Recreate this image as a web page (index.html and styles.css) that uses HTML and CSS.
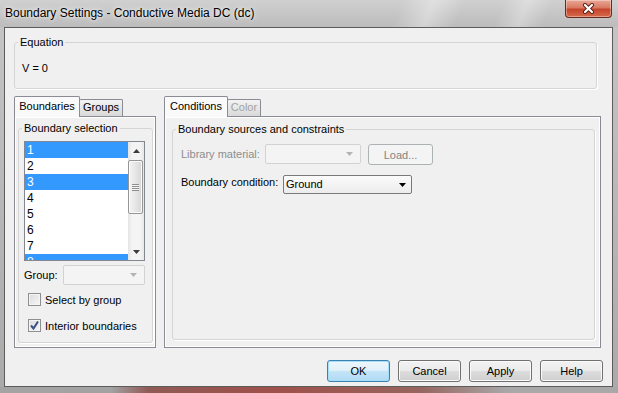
FILE: index.html
```html
<!DOCTYPE html>
<html lang="en">
  <head>
    <meta charset="UTF-8" />
    <title>Boundary Settings - Conductive Media DC (dc)</title>
    <link rel="stylesheet" href="styles.css">
  </head>
  <body>
    <div class="window">
      <!-- Title bar -->
      <div class="titlebar">
        <span class="title">Boundary Settings - Conductive Media DC (dc)</span>
        <span class="close-btn">
          <svg width="13" height="11" viewBox="0 0 13 11">
            <path d="M3 2 L10 9 M10 2 L3 9" stroke="#5a1c12" stroke-width="4" stroke-linecap="round" fill="none"/>
            <path d="M3 2 L10 9 M10 2 L3 9" stroke="#ffffff" stroke-width="2.2" stroke-linecap="round" fill="none"/>
          </svg>
        </span>
      </div>

      <div class="client">
        <!-- Equation -->
        <fieldset class="group equation">
          <legend>Equation</legend>
          <div class="equation-body">V = 0</div>
        </fieldset>

        <div class="panels">
          <!-- Boundaries / Groups -->
          <div class="tabctl tabctl-left">
            <div class="tabs">
              <span class="tab active tab-boundaries">Boundaries</span>
              <span class="tab tab-groups">Groups</span>
            </div>
            <div class="pane">
              <fieldset class="group selection">
                <legend>Boundary selection</legend>
                <div class="selection-body">
                  <div class="listbox">
                    <div class="items">
                      <div class="item selected">1</div>
                      <div class="item">2</div>
                      <div class="item selected">3</div>
                      <div class="item">4</div>
                      <div class="item">5</div>
                      <div class="item">6</div>
                      <div class="item">7</div>
                      <div class="item selected">8</div>
                    </div>
                    <div class="vscroll">
                      <div class="arrow">
                        <svg width="7" height="4" viewBox="0 0 7 4"><path d="M3.5 0 L7 4 L0 4 Z" fill="#3c3c3c"/></svg>
                      </div>
                      <div class="track">
                        <div class="thumb"><span class="grip"></span></div>
                      </div>
                      <div class="arrow">
                        <svg width="7" height="4" viewBox="0 0 7 4"><path d="M0 0 L7 0 L3.5 4 Z" fill="#3c3c3c"/></svg>
                      </div>
                    </div>
                  </div>

                  <div class="group-row">
                    <span class="group-label">Group:</span>
                    <span class="combo disabled group-combo">
                      <svg width="7" height="4" viewBox="0 0 7 4"><path d="M0 0 L7 0 L3.5 4 Z" fill="#b4b4b4"/></svg>
                    </span>
                  </div>

                  <div class="check-row first">
                    <span class="checkbox"></span>
                    <span>Select by group</span>
                  </div>
                  <div class="check-row">
                    <span class="checkbox">
                      <svg width="11" height="11" viewBox="0 0 11 11"><path d="M2 5.5 L4.5 8.5 L9 1.5" stroke="#3b4f86" stroke-width="2" fill="none"/></svg>
                    </span>
                    <span>Interior boundaries</span>
                  </div>
                </div>
              </fieldset>
            </div>
          </div>

          <!-- Conditions / Color -->
          <div class="tabctl tabctl-right">
            <div class="tabs">
              <span class="tab active tab-conditions">Conditions</span>
              <span class="tab disabled tab-color">Color</span>
            </div>
            <div class="pane">
              <fieldset class="group sources">
                <legend>Boundary sources and constraints</legend>
                <div class="sources-body">
                  <div class="form-row">
                    <span class="form-label disabled library-label">Library material:</span>
                    <span class="combo disabled library-combo">
                      <svg width="7" height="4" viewBox="0 0 7 4"><path d="M0 0 L7 0 L3.5 4 Z" fill="#b4b4b4"/></svg>
                    </span>
                    <span class="btn disabled load-btn">Load...</span>
                  </div>
                  <div class="form-row second">
                    <span class="form-label condition-label">Boundary condition:</span>
                    <span class="combo condition-combo">
                      <span class="combo-text">Ground</span>
                      <svg width="7" height="4" viewBox="0 0 7 4"><path d="M0 0 L7 0 L3.5 4 Z" fill="#000"/></svg>
                    </span>
                  </div>
                </div>
              </fieldset>
            </div>
          </div>
        </div>

        <!-- Dialog buttons -->
        <div class="buttons">
          <span class="btn default">OK</span>
          <span class="btn">Cancel</span>
          <span class="btn">Apply</span>
          <span class="btn">Help</span>
        </div>
      </div>

      <div class="frame-bottom"></div>
    </div>
  </body>
</html>
```

FILE: styles.css
```css
* {
  box-sizing: border-box;
}
html,
body {
  margin: 0;
  padding: 0;
}
body {
  width: 618px;
  height: 393px;
  overflow: hidden;
  font-family: "Liberation Sans", Arial, sans-serif;
  font-size: 11px;
  color: #000;
  background: #b4b4b4;
}
.window {
  height: 393px;
  display: flex;
  flex-direction: column;
  background: linear-gradient(#c6c6c6, #aaaaaa);
}

/* Title bar */
.titlebar {
  flex: none;
  height: 27px;
  display: flex;
  justify-content: space-between;
  align-items: flex-start;
  padding: 0 6px 0 5px;
  background:
    linear-gradient(112deg, rgba(255, 255, 255, 0) 64%, rgba(255, 255, 255, 0.35) 69%, rgba(255, 255, 255, 0) 74%, rgba(255, 255, 255, 0) 80%, rgba(255, 255, 255, 0.3) 84%, rgba(255, 255, 255, 0) 88%),
    linear-gradient(#d0d0d0, #bcbcbc);
}
.title {
  margin-top: 6px;
  font-size: 12px;
  line-height: 15px;
  text-shadow: 0 0 6px rgba(255, 255, 255, 0.9), 0 0 3px rgba(255, 255, 255, 0.7);
}
.close-btn {
  width: 47px;
  height: 18px;
  display: flex;
  align-items: center;
  justify-content: center;
  border: 1px solid #6a2a1f;
  border-top: none;
  border-radius: 0 0 4px 4px;
  background: linear-gradient(#e9a898, #d97a62 45%, #c4452c 55%, #d8694c);
  box-shadow: inset 0 0 0 1px rgba(255, 255, 255, 0.35);
}

/* Client area */
.client {
  flex: none;
  height: 360px;
  margin: 0 5px 0 4px;
  border: 1px solid #5c5c5c;
  background: #f0f0f0;
  display: flex;
  flex-direction: column;
}
.frame-bottom {
  flex: 1;
  background: linear-gradient(to right, #a4a4a4, #a2a2a2 18%, #8f5a55 24%, #a0504a 45%, #96655f 68%, #a8a8a8 82%);
}

/* Group boxes */
.group {
  margin: 0;
  padding: 0;
  min-width: 0;
  border: 1px solid #d5d5d5;
  border-radius: 3px;
  box-shadow: 1px 1px 0 #fff;
}
.group legend {
  margin-left: 3px;
  padding: 0 2px;
  line-height: 13px;
}
.equation {
  margin: 8px 15px 0 9px;
}
.equation-body {
  padding: 13px 7px 13px;
  line-height: 13px;
}

/* Tab controls */
.panels {
  display: flex;
  gap: 8px;
  height: 252px;
  margin: 7px 11px 0 9px;
}
.tabctl {
  display: flex;
  flex-direction: column;
}
.tabctl-left {
  width: 142px;
}
.tabctl-right {
  width: 437px;
}
.tabs {
  height: 20px;
  display: flex;
  align-items: flex-end;
}
.tab {
  height: 17px;
  margin-left: -1px;
  line-height: 15px;
  text-align: center;
  border: 1px solid #898c95;
  border-bottom: none;
  border-radius: 2px 2px 0 0;
  background: linear-gradient(#f3f3f3, #e6e6e6 50%, #d9d9d9);
}
.tab.active {
  height: 21px;
  margin-left: 0;
  margin-bottom: -1px;
  line-height: 18px;
  background: #fafafa;
  position: relative;
  z-index: 1;
}
.tab.disabled {
  color: #a3a3a3;
}
.tab-boundaries {
  width: 66px;
}
.tab-groups {
  width: 44px;
}
.tab-conditions {
  width: 64px;
}
.tab-color {
  width: 34px;
}
.pane {
  flex: 1;
  border: 1px solid #898c95;
  background: #f0f0f0;
  box-shadow: inset 1px 1px 0 #fff, inset -1px -1px 0 #fff;
}

/* Boundary selection */
.selection {
  height: 221px;
  margin: 5px 2px 0 3px;
}
.selection-body {
  padding: 6px 0 0 5px;
}
.listbox {
  width: 121px;
  height: 120px;
  display: flex;
  border: 1px solid #828790;
  background: #fff;
}
.items {
  flex: 1;
  overflow: hidden;
}
.item {
  height: 16px;
  padding-left: 2px;
  font-size: 12px;
  line-height: 16px;
}
.item.selected {
  background: #3399ff;
  color: #fff;
}
.vscroll {
  width: 16px;
  display: flex;
  flex-direction: column;
  background: linear-gradient(to right, #e4e4e4, #f4f4f4 25%, #f4f4f4 75%, #e8e8e8);
}
.arrow {
  height: 17px;
  display: flex;
  align-items: center;
  justify-content: center;
}
.track {
  flex: 1;
  padding-top: 1px;
}
.thumb {
  width: 15px;
  height: 54px;
  display: flex;
  align-items: center;
  justify-content: center;
  border: 1px solid #969696;
  border-radius: 2px;
  background: linear-gradient(to right, #f4f4f4, #e6e6e6 50%, #d6d6d6);
  box-shadow: inset 0 0 0 1px #fafafa;
}
.grip {
  width: 7px;
  height: 7px;
  background: repeating-linear-gradient(#8e8e8e 0 1px, #f6f6f6 1px 2px);
}
.group-row {
  height: 20px;
  margin-top: 4px;
  display: flex;
  align-items: center;
}
.group-label {
  width: 39px;
}
.combo {
  display: flex;
  align-items: center;
  justify-content: flex-end;
  border: 1px solid #7a7a7a;
  border-radius: 2px;
  background: linear-gradient(#fbfbfb, #ececec);
}
.combo.disabled {
  border-color: #d2d2d2;
  background: #f4f4f4;
  padding-right: 7px;
}
.group-combo {
  width: 82px;
  height: 20px;
}
.check-row {
  display: flex;
  align-items: center;
  gap: 4px;
  height: 13px;
  margin-top: 13px;
  padding-left: 4px;
}
.check-row.first {
  margin-top: 8px;
}
.checkbox {
  width: 13px;
  height: 13px;
  display: flex;
  align-items: center;
  justify-content: center;
  border: 1px solid #8e8f8f;
  background: linear-gradient(135deg, #dcdcdc, #f6f6f6);
  box-shadow: inset 0 0 0 1px #f4f4f4;
}

/* Boundary sources and constraints */
.sources {
  height: 217px;
  margin: 6px 5px 0 7px;
}
.sources-body {
  padding: 8px 0 0 8px;
}
.form-row {
  display: flex;
  align-items: flex-start;
  height: 21px;
}
.form-row.second {
  margin-top: 10px;
  height: 19px;
}
.form-label {
  line-height: 20px;
}
.form-label.disabled {
  color: #8d8d8d;
}
.library-label {
  width: 84px;
}
.condition-label {
  width: 102px;
  line-height: 14px;
}
.library-combo {
  width: 96px;
  height: 20px;
}
.condition-combo {
  width: 129px;
  height: 19px;
  padding: 0 5px 0 2px;
  justify-content: space-between;
}
.combo-text {
  line-height: 17px;
}

/* Buttons */
.btn {
  width: 63px;
  height: 22px;
  line-height: 20px;
  text-align: center;
  border: 1px solid #707070;
  border-radius: 3px;
  background: linear-gradient(#f2f2f2, #ebebeb 50%, #dddddd 50%, #cfcfcf);
  box-shadow: inset 0 0 0 1px #fbfbfb;
}
.btn.default {
  border-color: #3c7fb1;
  background: linear-gradient(#eef7fc, #deeff9 50%, #c4e5f8 50%, #b0daf5);
  box-shadow: inset 0 0 0 1px #a4def8;
}
.btn.disabled {
  color: #838383;
  border-color: #adb2b5;
  background: #f4f4f4;
  box-shadow: none;
}
.load-btn {
  width: 65px;
  height: 21px;
  margin-left: 7px;
}
.buttons {
  display: flex;
  justify-content: flex-end;
  gap: 8px;
  margin: 12px 9px 0 0;
}
```
